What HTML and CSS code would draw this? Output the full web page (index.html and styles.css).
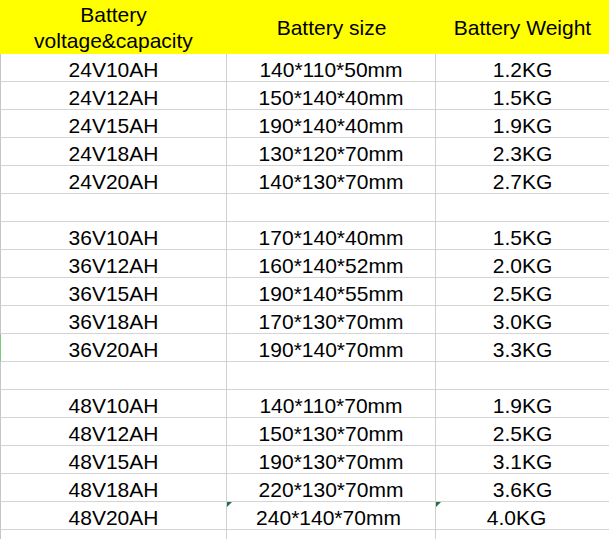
FILE: index.html
```html
<!DOCTYPE html>
<html>
<head>
<meta charset="utf-8">
<link rel="stylesheet" href="styles.css">
</head>
<body>
<div class="sheet">
  <div class="hd">Battery<br>voltage&amp;capacity</div>
  <div class="hd">Battery size</div>
  <div class="hd">Battery Weight</div>

  <div class="c c1">24V10AH</div><div class="c c2">140*110*50mm</div><div class="c c3">1.2KG</div>
  <div class="c c1">24V12AH</div><div class="c c2">150*140*40mm</div><div class="c c3">1.5KG</div>
  <div class="c c1">24V15AH</div><div class="c c2">190*140*40mm</div><div class="c c3">1.9KG</div>
  <div class="c c1">24V18AH</div><div class="c c2">130*120*70mm</div><div class="c c3">2.3KG</div>
  <div class="c c1">24V20AH</div><div class="c c2">140*130*70mm</div><div class="c c3">2.7KG</div>
  <div class="c c1"></div><div class="c c2"></div><div class="c c3"></div>

  <div class="c c1">36V10AH</div><div class="c c2">170*140*40mm</div><div class="c c3">1.5KG</div>
  <div class="c c1">36V12AH</div><div class="c c2">160*140*52mm</div><div class="c c3">2.0KG</div>
  <div class="c c1">36V15AH</div><div class="c c2">190*140*55mm</div><div class="c c3">2.5KG</div>
  <div class="c c1">36V18AH</div><div class="c c2">170*130*70mm</div><div class="c c3">3.0KG</div>
  <div class="c c1 mark">36V20AH</div><div class="c c2">190*140*70mm</div><div class="c c3">3.3KG</div>
  <div class="c c1"></div><div class="c c2"></div><div class="c c3"></div>

  <div class="c c1">48V10AH</div><div class="c c2">140*110*70mm</div><div class="c c3">1.9KG</div>
  <div class="c c1">48V12AH</div><div class="c c2">150*130*70mm</div><div class="c c3">2.5KG</div>
  <div class="c c1">48V15AH</div><div class="c c2">190*130*70mm</div><div class="c c3">3.1KG</div>
  <div class="c c1">48V18AH</div><div class="c c2">220*130*70mm</div><div class="c c3">3.6KG</div>
  <div class="c c1">48V20AH</div><div class="c c2 flag shift-s">240*140*70mm</div><div class="c c3 flag shift-w">4.0KG</div>
  <div class="c c1"></div><div class="c c2"></div><div class="c c3"></div>
</div>
</body>
</html>
```

FILE: styles.css
```css
html, body {
  margin: 0;
  padding: 0;
  background: #ffffff;
}

.sheet {
  width: 609px;
  height: 539px;
  overflow: hidden;
  display: grid;
  grid-template-columns: 227px 209px 173px;
  grid-template-rows: 54px;
  grid-auto-rows: 28px;
  font-family: "Liberation Sans", Arial, sans-serif;
  font-size: 21px;
  color: #000000;
}

.hd {
  background: #ffff00;
  display: flex;
  align-items: center;
  justify-content: center;
  text-align: center;
  line-height: 26px;
  padding-top: 1px;
}

.c {
  position: relative;
  box-sizing: border-box;
  border-bottom: 1px solid #d4d4d4;
  text-align: center;
  line-height: 23px;
  padding-top: 4px;
  white-space: nowrap;
}

.c1 {
  border-left: 1px solid #c6c6c6;
  border-right: 1px solid #d0d0d0;
}

.c2 {
  border-right: 1px solid #d0d0d0;
}

.mark {
  border-left: 1px solid #77cc77;
}

.shift-s {
  padding-right: 5px;
}

.shift-w {
  padding-right: 12px;
}

.flag::before {
  content: "";
  position: absolute;
  left: 0;
  top: 0;
  width: 0;
  height: 0;
  border-top: 5px solid #217346;
  border-right: 5px solid transparent;
}
```
